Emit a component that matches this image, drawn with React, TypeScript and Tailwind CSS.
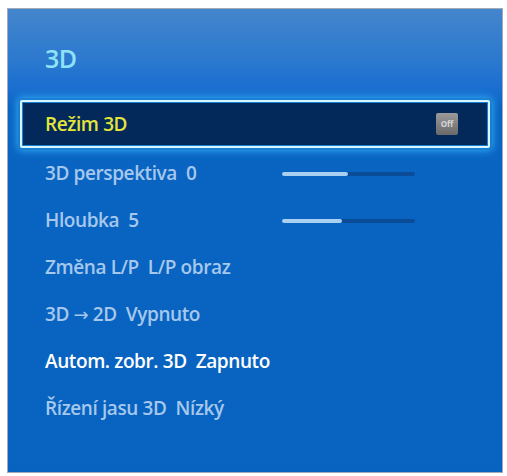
const ROWS: { name: string; value: string; tone: "dim" | "bright"; slider?: number }[] = [
  { name: "3D perspektiva", value: "0", tone: "dim", slider: 66 },
  { name: "Hloubka", value: "5", tone: "dim", slider: 60 },
  { name: "Změna L/P", value: "L/P obraz", tone: "dim" },
  { name: "3D → 2D", value: "Vypnuto", tone: "dim" },
  { name: "Autom. zobr. 3D", value: "Zapnuto", tone: "bright" },
  { name: "Řízení jasu 3D", value: "Nízký", tone: "dim" },
];

function OffBadge() {
  return (
    <div className="flex h-[22px] w-[22px] items-center justify-center rounded-[2px] bg-[linear-gradient(180deg,#9a9a9a,#6a6a6a)]">
      <span className="text-[8px] font-bold leading-none text-[#d8d8d8]">Off</span>
    </div>
  );
}

function Slider({ value }: { value: number }) {
  return (
    <div className="h-[4px] w-[133px] rounded-full bg-[#0a4c98]">
      <div className="h-full rounded-full bg-[#a8d0f0]" style={{ width: `${value}px` }} />
    </div>
  );
}

function Label({ name }: { name: string }) {
  // the arrow glyph in Open Sans is tiny, borrow DejaVu's
  const parts = name.split("→");
  if (parts.length === 1) return <>{name}</>;
  return (
    <>
      {parts[0]}
      <span style={{ fontFamily: '"DejaVu Sans", sans-serif' }} className="text-[18px] font-normal">
        →
      </span>
      {parts[1]}
    </>
  );
}

export default function App() {
  return (
    <div
      className="h-[476px] w-[507px] bg-white pl-[7px] pt-[8px]"
      style={{ fontFamily: '"Open Sans", "Noto Sans", sans-serif' }}
    >
      <div className="flex h-[465px] w-[496px] flex-col border border-[#a0aab8] bg-[linear-gradient(180deg,#4486cc_0px,#2c79cf_50px,#1a6ed0_80px,#0a64c2_100px,#0863c0_100%)]">
        {/* Title */}
        <div className="flex h-[89px] items-center pl-[37px] pt-[10px]">
          <span className="text-[25px] font-semibold tracking-[-0.5px] text-[#8ee2f6]">3D</span>
        </div>

        {/* Selected row */}
        <div className="mx-[10px] h-[52px] rounded-[3px] bg-[#2aa8f0]/40 p-[2px] shadow-[0_0_8px_#38b8ff]">
          <div className="h-full rounded-[2px] border-2 border-[#d8f6ff] p-[1px]">
            <div className="flex h-full items-center justify-between bg-[#03295a] pl-[22px] pr-[29px]">
              <span className="text-[19px] font-semibold tracking-[-0.4px] text-[#e4e43a]">Režim 3D</span>
              <OffBadge />
            </div>
          </div>
        </div>

        {/* Options */}
        <div className="flex flex-col">
          {ROWS.map((r) => (
            <div key={r.name} className="flex h-[47px] items-center pl-[37px]">
              <span
                className={
                  "w-[237px] whitespace-nowrap text-[19px] font-semibold tracking-[-0.4px] " +
                  (r.tone === "bright" ? "text-white" : "text-[#a6c8ec]")
                }
              >
                <Label name={r.name} />
                <span className="ml-[9px]">{r.value}</span>
              </span>
              {r.slider !== undefined && <Slider value={r.slider} />}
            </div>
          ))}
        </div>
      </div>
    </div>
  );
}
